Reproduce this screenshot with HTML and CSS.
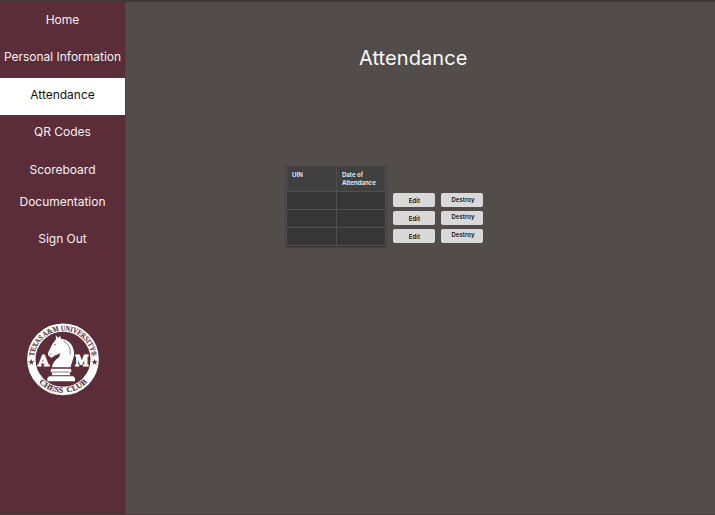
FILE: index.html
```html
<!DOCTYPE html>
<html lang="en">
<head>
<meta charset="utf-8">
<title>Attendance</title>
<link rel="stylesheet" href="styles.css">
</head>
<body>
<div class="app">
  <aside class="sidebar">
    <nav class="nav">
      <a class="home">Home</a>
      <a>Personal Information</a>
      <a class="active">Attendance</a>
      <a>QR Codes</a>
      <a class="score">Scoreboard</a>
      <a class="docs">Documentation</a>
      <a>Sign Out</a>
    </nav>
    <svg class="logo" viewBox="0 0 270 270">
      <defs>
        <path id="top" d="M48 134 A87 87 0 0 1 222 134"/>
        <path id="bottom" d="M34 132 A101 101 0 0 0 236 132"/>
      </defs>
      <circle cx="135" cy="133" r="95" fill="none" stroke="#fff" stroke-width="25"/>
      <g class="ring">
        <text text-anchor="middle"><textPath href="#top" startOffset="50%" textLength="254" lengthAdjust="spacingAndGlyphs">TEXAS A&amp;M UNIVERSITY®</textPath></text>
        <text text-anchor="middle"><textPath href="#bottom" startOffset="50%" textLength="162" lengthAdjust="spacingAndGlyphs">CHESS &nbsp;CLUB</textPath></text>
        <path d="M40 133l2.500 6h6l-5 4 2 6-5.500-4-5.500 4 2-6-5-4h6zM230 133l2.500 6h6l-5 4 2 6-5.500-4-5.500 4 2-6-5-4h6z"/>
      </g>
      <g class="letters"><text x="60" y="152" textLength="33" lengthAdjust="spacingAndGlyphs">A</text><text x="171" y="152" textLength="41" lengthAdjust="spacingAndGlyphs">M</text></g>
      <path class="piece" d="M114 73L113 61L121 69L126 62L129 71C151 72 167 91 168 112C169 129 161 140 158 157H102C103 143 113 134 124 125L127 114C118 121 110 120 105 126L99 128L90 120L91 111L105 84ZM100 161H158L161 169L155 173L157 181H101L103 173L97 169ZM94 184H166L171 189V199H88V189Z"/>
      <path class="detail" d="M108 90l7-3M95 119l5-3M137 78c15 9 22 23 19 40M103 171h51"/>
    </svg>
  </aside>
  <main class="main">
    <h1>Attendance</h1>
    <div class="records">
      <div class="table">
        <div class="th">UIN</div><div class="th">Date of Attendance</div>
        <div></div><div></div>
        <div></div><div></div>
        <div></div><div></div>
      </div>
      <div class="actions edits">
        <button>Edit</button><button>Edit</button><button>Edit</button>
      </div>
      <div class="actions destroys">
        <button>Destroy</button><button class="high">Destroy</button><button class="high">Destroy</button>
      </div>
    </div>
  </main>
</div>
</body>
</html>
```

FILE: styles.css
```css
* { box-sizing: border-box; }
body { margin: 0; font-family: Inter, "Liberation Sans", sans-serif; background: #524c4b; }
.app {
  display: flex;
  height: 515px;
  border-top: 2px solid #3d3938;
  border-bottom: 1px solid #473f3f;
}
.sidebar { width: 125px; flex: none; background: #5b2d39; }
.nav { display: flex; flex-direction: column; height: 273px; }
.nav a {
  flex: none;
  height: 37.5px;
  line-height: 34px;
  font-size: 12px;
  letter-spacing: -0.02px;
  text-align: center;
  color: #f5f0f1;
  white-space: nowrap;
}
.nav .home { height: 38px; line-height: 35px; }
.nav .active { background: #fff; color: #111; }
.nav .score { height: 32px; }
.logo { display: block; width: 90px; height: 90px; margin: 40px 0 0 18px; }
.ring { fill: #5b2d39; stroke: #5b2d39; stroke-width: 0.4; font: bold 23px "Liberation Serif", serif; }
.letters { fill: #fff; stroke: #fff; stroke-width: 3; font: bold 46px "DejaVu Serif", serif; }
.piece { fill: #fff; }
.detail { fill: none; stroke: #5b2d39; stroke-width: 2; }
.main { flex: 1; background: #524c4b; border-left: 1px solid #574042; }
h1 {
  width: 108px;
  margin: 42px 0 0 233px;
  font-size: 20px;
  letter-spacing: 0.08px;
  line-height: 29px;
  font-weight: 400;
  color: #fafafa;
  white-space: nowrap;
}
.records { display: flex; align-items: flex-start; margin: 92px 0 0 160px; }
.table {
  display: grid;
  grid-template-columns: 49px 48px;
  grid-template-rows: 25px 17px 17px 17px;
  gap: 1px;
  width: 100px;
  padding: 1px;
  background: #505050;
  border-radius: 2px;
  box-shadow: 0 1px 2px #302c2c;
}
.table div { background: #363636; }
.table .th {
  padding: 5px 0 0 5px;
  background: #404040;
  color: #f5f5f5;
  font-size: 6px;
  letter-spacing: 0.04px;
  line-height: 8px;
  font-weight: 600;
}
.actions { display: flex; flex-direction: column; gap: 4px; }
.edits { margin: 28px 0 0 6.5px; }
.destroys { margin: 28px 0 0 6.5px; }
.actions button {
  width: 42px;
  height: 14px;
  padding: 0 0 0 2px;
  border: 0;
  border-radius: 2px;
  background: #d9d9d9;
  color: #111;
  font: 600 6px/14px Inter, sans-serif;
  letter-spacing: 0.06px;
}
.edits button { line-height: 15px; }
.actions .high { line-height: 10px; padding-bottom: 3px; }
```
